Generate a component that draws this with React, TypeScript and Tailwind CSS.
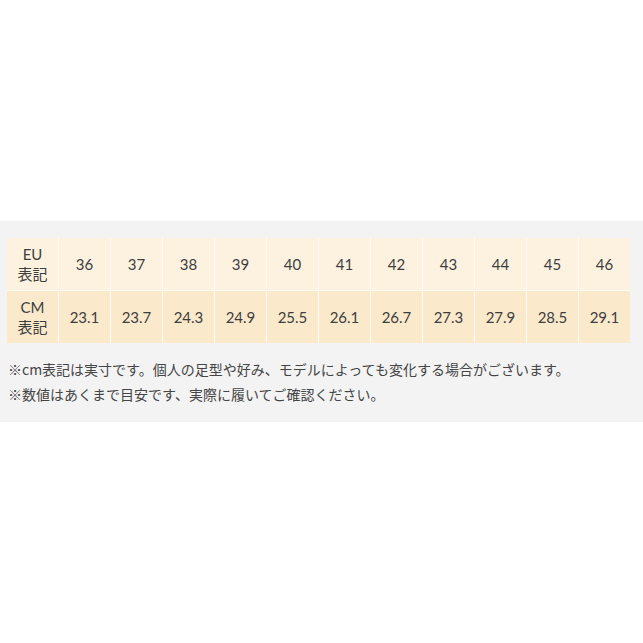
import React from 'react';

// Size conversion table: EU size -> cm
const euSizes = ['36', '37', '38', '39', '40', '41', '42', '43', '44', '45', '46'];
const cmSizes = ['23.1', '23.7', '24.3', '24.9', '25.5', '26.1', '26.7', '27.3', '27.9', '28.5', '29.1'];

const notes = [
    '※cm表記は実寸です。個人の足型や好み、モデルによっても変化する場合がございます。',
    '※数値はあくまで目安です、実際に履いてご確認ください。',
];

function Row({ label, values, bg }: { label: string; values: string[]; bg: string }) {
    return (
        <div className={`flex h-[52px] ${bg}`}>
            <div className="w-[52px] flex flex-col items-center justify-center border-r border-[#fffaf2] text-[15px] leading-[20px]">
                <span>{label}</span>
                <span className="font-['Noto_Sans_CJK_JP',sans-serif]">表記</span>
            </div>
            {values.map((v, i) => (
                <div
                    key={v}
                    className={`flex-1 flex items-center justify-center text-[15px] ${i < values.length - 1 ? 'border-r border-[#fffaf2]' : ''}`}
                >
                    {v}
                </div>
            ))}
        </div>
    );
}

export default function App() {
    return (
        <div className="w-[643px] h-[643px] bg-white flex flex-col font-['Lato','Noto_Sans_CJK_JP',sans-serif] text-[#3e3e3e]">
            <div className="mt-[221px] h-[201px] bg-[#f3f3f3] pt-[17px] px-[7px]">
                <div className="w-[623px] flex flex-col">
                    <Row label="EU" values={euSizes} bg="bg-[#fdf2e0]" />
                    <div className="h-px bg-[#fffaf2]" />
                    <Row label="CM" values={cmSizes} bg="bg-[#fbe9cb]" />
                </div>
                <div className="mt-[17px] pl-px flex flex-col gap-[6px] text-[14px] leading-[19px] text-[#454545] font-['Noto_Sans_CJK_JP',sans-serif]">
                    {notes.map((n) => (
                        <p key={n}>{n}</p>
                    ))}
                </div>
            </div>
        </div>
    );
}
